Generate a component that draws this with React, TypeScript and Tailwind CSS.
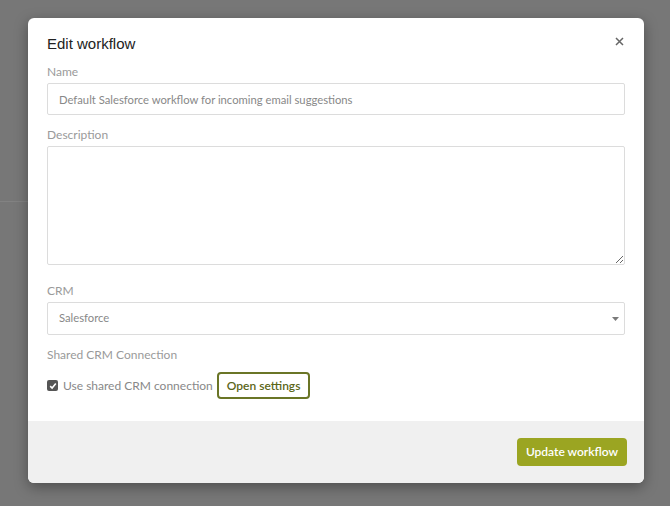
import { useState } from "react";

export default function App() {
  const [name, setName] = useState("Default Salesforce workflow for incoming email suggestions");
  const [description, setDescription] = useState("");
  const [crm, setCrm] = useState("Salesforce");
  const [shared, setShared] = useState(true);

  return (
    <div className="relative w-[670px] h-[506px] overflow-hidden bg-[#777777] font-['Lato',sans-serif]">
      {/* page behind the overlay */}
      <div className="absolute left-0 w-[28px] top-[201px] h-px bg-[#828282]" />

      <div className="relative pt-[18px] pl-[28px]">
        <div className="w-[616px] rounded-[6px] bg-white shadow-[0_4px_14px_rgba(0,0,0,0.35)] overflow-hidden">
          <div className="px-[19px]">
            {/* Header */}
            <div className="flex items-start justify-between pt-[17px]">
              <h2 className="text-[15px] leading-[18px] text-[#222] font-['Liberation_Sans',Arial,sans-serif]">
                Edit workflow
              </h2>
              <button className="mt-[1px] mr-[1px] w-[10px] h-[10px] flex items-center justify-center text-[#666]">
                <svg width="9" height="9" viewBox="0 0 9 9">
                  <path d="M1 1L8 8M8 1L1 8" stroke="currentColor" strokeWidth="1.5" />
                </svg>
              </button>
            </div>

            {/* Name */}
            <label className="block mt-[11px] mb-[3px] text-[12px] leading-4 text-[#9a9a9a]">Name</label>
            <input
              value={name}
              onChange={(e) => setName(e.target.value)}
              className="block w-full h-[32px] px-[11px] border border-[#dcdcdc] rounded-[2px] text-[11.25px] text-[#888] outline-none"
            />

            {/* Description */}
            <label className="block mt-[12px] mb-[3px] text-[12px] leading-4 text-[#9a9a9a]">Description</label>
            <textarea
              value={description}
              onChange={(e) => setDescription(e.target.value)}
              className="block w-full h-[119px] px-[11px] py-2 border border-[#dcdcdc] rounded-[2px] text-[11.25px] text-[#888] outline-none"
            />

            {/* CRM */}
            <label className="block mt-[18px] mb-[3px] text-[12px] leading-4 text-[#9a9a9a]">CRM</label>
            <div className="relative">
              <select
                value={crm}
                onChange={(e) => setCrm(e.target.value)}
                className="block w-full h-[33px] px-[11px] appearance-none bg-white border border-[#dcdcdc] rounded-[2px] text-[11.25px] text-[#888] outline-none"
              >
                <option>Salesforce</option>
                <option>HubSpot</option>
              </select>
              <svg
                className="absolute right-[6px] top-[15px] pointer-events-none"
                width="7"
                height="4"
                viewBox="0 0 7 4"
              >
                <path d="M0 0H7L3.5 4Z" fill="#7a7a7a" />
              </svg>
            </div>

            {/* Shared CRM connection */}
            <div className="mt-[12px] text-[12px] leading-4 text-[#9a9a9a]">Shared CRM Connection</div>
            <div className="flex items-center mt-[9px]">
              <button
                onClick={() => setShared(!shared)}
                className="w-[11px] h-[11px] rounded-[2px] bg-[#555] flex items-center justify-center"
              >
                {shared && (
                  <svg width="8" height="8" viewBox="0 0 8 8">
                    <path d="M1.2 4.2L3.1 6L6.8 1.6" fill="none" stroke="white" strokeWidth="1.6" />
                  </svg>
                )}
              </button>
              <span className="ml-[5px] text-[12px] text-[#888]">Use shared CRM connection</span>
              <button className="ml-[4px] h-[27px] px-[8px] border-2 border-[#6a7526] rounded-[4px] text-[12px] font-semibold text-[#5b6618]">
                Open settings
              </button>
            </div>
          </div>

          {/* Footer */}
          <div className="mt-[22px] h-[62px] bg-[#f0f0f0] flex items-start justify-end pt-[17px] pr-[17px]">
            <button className="h-[28px] px-[9px] rounded-[4px] bg-[#9ba522] text-white text-[12px] font-semibold">
              Update workflow
            </button>
          </div>
        </div>
      </div>
    </div>
  );
}
